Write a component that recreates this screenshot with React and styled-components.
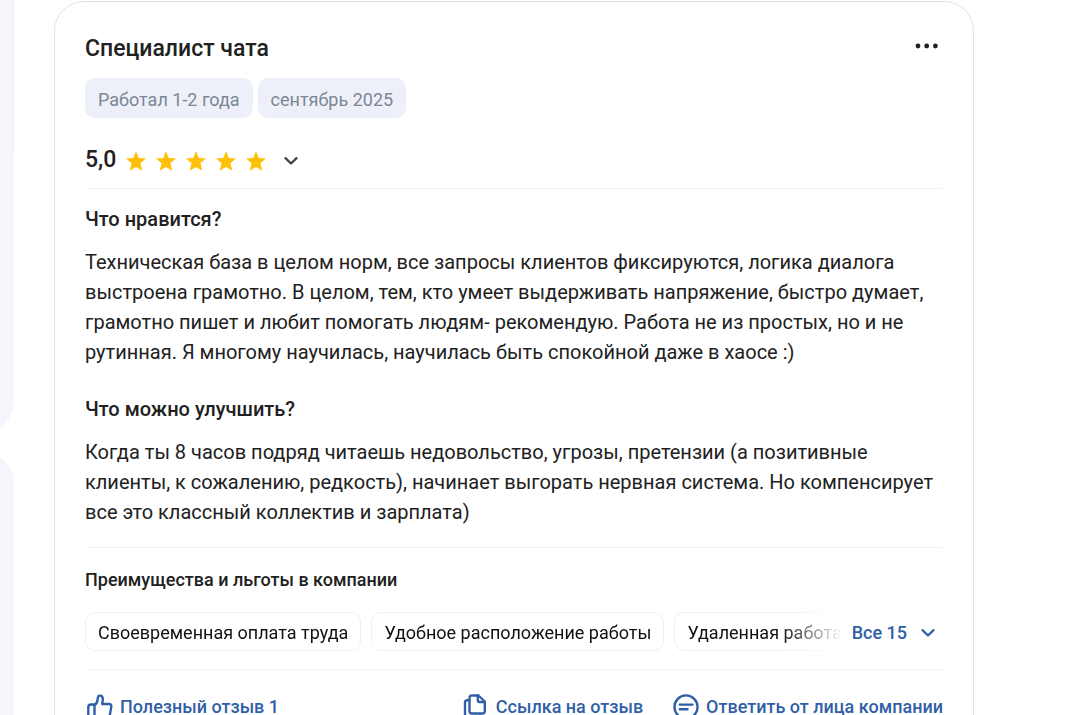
import React from 'react';
import styled, { createGlobalStyle } from 'styled-components';

const GlobalStyle = createGlobalStyle`
  * {
    box-sizing: border-box;
  }

  body {
    margin: 0;
    background: #fff;
    color: #212121;
    font-family: Roboto, "Liberation Sans", sans-serif;
    font-size: 20px;
    line-height: 30px;
  }

  button {
    padding: 0;
    border: 0;
    background: none;
    font: inherit;
    cursor: pointer;
  }
`;

const tags = ['Работал 1-2 года', 'сентябрь 2025'];

const answers = [
  {
    id: 1,
    title: 'Что нравится?',
    text: 'Техническая база в целом норм, все запросы клиентов фиксируются, логика диалога выстроена грамотно. В целом, тем, кто умеет выдерживать напряжение, быстро думает, грамотно пишет и любит помогать людям- рекомендую. Работа не из простых, но и не рутинная. Я многому научилась, научилась быть спокойной даже в хаосе :)',
  },
  {
    id: 2,
    title: 'Что можно улучшить?',
    text: 'Когда ты 8 часов подряд читаешь недовольство, угрозы, претензии (а позитивные клиенты, к сожалению, редкость), начинает выгорать нервная система. Но компенсирует все это классный коллектив и зарплата)',
  },
];

const benefits = [
  'Своевременная оплата труда',
  'Удобное расположение работы',
  'Удаленная работа',
];

const Star = () => (
  <svg width="20" height="20" viewBox="0 0 20 20" fill="#ffc107" aria-hidden="true">
    <path d="M10 0l2.700 6.900 7.300.5-5.600 4.800 1.900 7.600L10 15.900l-6.300 3.900 1.900-7.600L0 7.400l7.300-.5z" />
  </svg>
);

const Chevron = () => (
  <svg width="14" height="8" viewBox="0 0 14 8" fill="none" stroke="currentColor" strokeWidth="2.3" aria-hidden="true">
    <path d="M1.500 1.200L7 6.500l5.500-5.300" strokeLinecap="round" strokeLinejoin="round" />
  </svg>
);

const Dots = () => (
  <svg width="24" height="6" viewBox="0 0 24 6" fill="currentColor" aria-hidden="true">
    <circle cx="3" cy="3" r="2.4" />
    <circle cx="11.7" cy="3" r="2.4" />
    <circle cx="20.4" cy="3" r="2.4" />
  </svg>
);

const icons = {
  like: (
    <>
      <path d="M7.500 25V10.500H4q-2.700 0-2.700 3V25" />
      <path d="M7.500 11q2.500-1 3-5l.4-2.500q.6-2.400 2.600-1.800 2.500.7 2.300 4L15.200 10H22q2.600 0 2.300 2.600l-1.600 9.400q-.6 3-3.200 3h-12" />
    </>
  ),
  copy: (
    <>
      <path d="M9 1.500h6.500l6.300 6v9.500q0 2.500-2.500 2.500H9q-2.500 0-2.500-2.500V4q0-2.500 2.500-2.500z" />
      <path d="M14.800 1.500v4.500q0 2 2 2h5" />
      <path d="M6.500 6.300H4.200Q2 6.300 2 8.500V21q0 3 3 3h9.500q2.500 0 2.500-2.500" />
    </>
  ),
  reply: (
    <>
      <circle cx="13" cy="13" r="11.600" />
      <path d="M6.800 10.600h12.700M6.800 15.200h7.700" />
    </>
  ),
};

const Icon = ({ name }) => (
  <svg
    width="26"
    height="26"
    viewBox="0 0 26 26"
    fill="none"
    stroke="currentColor"
    strokeWidth="2.400"
    strokeLinecap="round"
    strokeLinejoin="round"
    aria-hidden="true"
  >
    {icons[name]}
  </svg>
);

const App = () => (
  <Page>
    <GlobalStyle />
    <Sidebar>
      <SidePanel $height="432px" $first>
        <SideLine />
      </SidePanel>
      <SidePanel $height="480px" />
    </Sidebar>

    <Review>
      <Header>
        <Title>Специалист чата</Title>
        <MenuButton type="button" aria-label="Меню">
          <Dots />
        </MenuButton>
      </Header>

      <Tags>
        {tags.map((tag) => (
          <Tag key={tag}>{tag}</Tag>
        ))}
      </Tags>

      <Rating>
        <Score>5,0</Score>
        <Stars>
          {[1, 2, 3, 4, 5].map((n) => (
            <Star key={n} />
          ))}
        </Stars>
        <RatingToggle type="button" aria-label="Показать оценки">
          <Chevron />
        </RatingToggle>
      </Rating>

      <Answers>
        {answers.map((item) => (
          <section key={item.id}>
            <Question>{item.title}</Question>
            <Text>{item.text}</Text>
          </section>
        ))}
      </Answers>

      <Benefits>
        <BenefitsTitle>Преимущества и льготы в компании</BenefitsTitle>
        <BenefitsRow>
          <Chips>
            {benefits.map((item) => (
              <Chip key={item}>{item}</Chip>
            ))}
          </Chips>
          <AllButton type="button">
            Все 15
            <Chevron />
          </AllButton>
        </BenefitsRow>
      </Benefits>

      <Actions>
        <Action type="button">
          <Icon name="like" />
          Полезный отзыв 1
        </Action>
        <ActionGroup>
          <Action type="button">
            <Icon name="copy" />
            Ссылка на отзыв
          </Action>
          <Action type="button">
            <Icon name="reply" />
            Ответить от лица компании
          </Action>
        </ActionGroup>
      </Actions>
    </Review>
  </Page>
);

const Page = styled.div`
  display: flex;
  align-items: flex-start;
  gap: 40px;
  height: 100vh;
  padding-right: 114px;
  overflow: hidden;
`;

const Sidebar = styled.aside`
  display: flex;
  flex: none;
  flex-direction: column;
  align-items: flex-end;
  gap: 21px;
  width: 14px;
  overflow: hidden;
`;

const SidePanel = styled.div`
  display: flex;
  justify-content: flex-end;
  width: 300px;
  height: ${(props) => props.$height};
  border-radius: ${(props) => (props.$first ? '0 0 30px 30px' : '30px')};
  background: #f5f6fc;
`;

const SideLine = styled.div`
  width: 1px;
  height: 152px;
  background: #ececf0;
`;

const Review = styled.article`
  flex: 1;
  min-width: 0;
  margin-top: 1px;
  padding: 30px 30px 32px;
  border: 1px solid #dee3eb;
  border-radius: 30px;
`;

const Header = styled.header`
  display: flex;
  align-items: flex-start;
  justify-content: space-between;
`;

const Title = styled.h2`
  margin: 0;
  font-size: 23px;
  font-weight: 500;
  line-height: 34px;
`;

const MenuButton = styled.button`
  display: flex;
  align-items: center;
  height: 28px;
  margin-right: 4px;
  color: #212121;
`;

const Tags = styled.div`
  display: flex;
  flex-wrap: wrap;
  gap: 5px;
  margin-top: 12px;
`;

const Tag = styled.span`
  padding: 7px 13px 3px;
  border-radius: 10px;
  background: #eef0f9;
  color: #7b8794;
  font-size: 18px;
`;

const Rating = styled.div`
  display: flex;
  align-items: center;
  padding: 24px 0 10px;
  border-bottom: 1px solid #f3f4f8;
`;

const Score = styled.span`
  font-size: 23px;
  font-weight: 500;
  line-height: 36px;
`;

const Stars = styled.div`
  display: flex;
  gap: 10px;
  margin-left: 10px;
  padding-top: 2px;
`;

const RatingToggle = styled.button`
  display: flex;
  margin-left: 18px;
  padding-top: 2px;
  color: #424242;
`;

const Answers = styled.div`
  display: flex;
  flex-direction: column;
  gap: 27px;
  padding: 15px 0 20px;
  border-bottom: 1px solid #f3f4f8;
`;

const Question = styled.h3`
  margin: 0 0 13px;
  font-size: 20px;
  font-weight: 500;
  line-height: 30px;
`;

const Text = styled.p`
  margin: 0;
`;

const Benefits = styled.section`
  padding: 17px 0 18px;
  border-bottom: 1px solid #f3f4f8;
`;

const BenefitsTitle = styled.h4`
  margin: 0 0 17px;
  font-size: 18px;
  font-weight: 500;
  line-height: 30px;
`;

const BenefitsRow = styled.div`
  display: flex;
  align-items: center;
`;

const Chips = styled.div`
  display: flex;
  flex: 1;
  gap: 10px;
  min-width: 0;
  overflow: hidden;
  mask-image: linear-gradient(to right, #000 calc(100% - 60px), transparent);
`;

const Chip = styled.span`
  flex: none;
  padding: 6px 12px 3px;
  border: 1px solid #eef0f9;
  border-radius: 10px;
  color: #111;
  font-size: 18px;
  line-height: 28px;
`;

const AllButton = styled.button`
  && {
    display: flex;
    align-items: center;
    gap: 14px;
    padding: 2px 8px 0 10px;
    color: #315fa7;
    font-size: 18px;
    font-weight: 500;
  }
`;

const Actions = styled.footer`
  display: flex;
  align-items: center;
  justify-content: space-between;
  padding: 22px 0 0 2px;
`;

const ActionGroup = styled.div`
  display: flex;
  gap: 30px;
`;

const Action = styled.button`
  && {
    display: flex;
    align-items: center;
    gap: 7px;
    color: #315fa7;
    font-size: 18px;
    font-weight: 500;
    white-space: nowrap;
  }
`;

export default App;
